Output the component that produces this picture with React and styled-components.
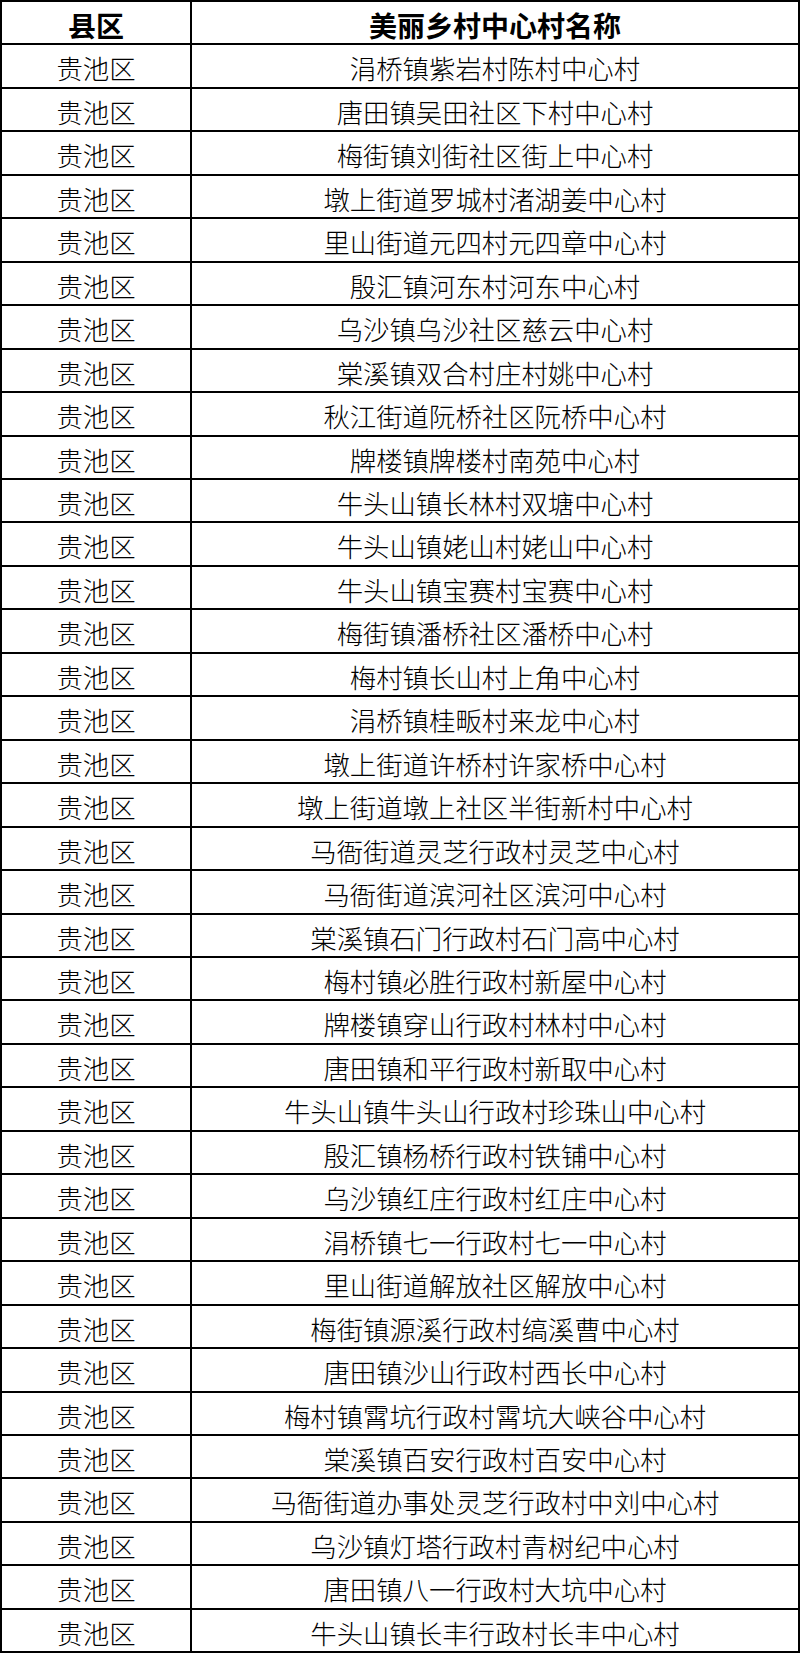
import React from "react";
import styled, { createGlobalStyle } from "styled-components";

const GlobalStyle = createGlobalStyle`
  html, body {
    margin: 0;
    padding: 0;
    background: #ffffff;
  }
  body {
    font-family: "Noto Sans CJK SC", "Noto Sans", sans-serif;
  }
`;

const Table = styled.div`
  width: 800px;
  height: 1653px;
  box-sizing: border-box;
  border: 2px solid #000;
  display: flex;
  flex-direction: column;
  background: #fff;
`;

const Row = styled.div`
  flex: 1 1 0;
  min-height: 0;
  display: grid;
  grid-template-columns: 188px 1fr;
  border-top: ${(p) => (p.$first ? "none" : "2px solid #000")};
`;

const Cell = styled.div`
  display: flex;
  align-items: center;
  justify-content: center;
  box-sizing: border-box;
  padding-top: ${(p) => (p.$head ? "4px" : "5px")};
  border-left: ${(p) => (p.$divider ? "2px solid #000" : "none")};
  font-family: "Noto Sans CJK SC", sans-serif;
  font-size: ${(p) => (p.$head ? "28px" : "26.4px")};
  font-weight: ${(p) => (p.$head ? 700 : 300)};
  color: #000;
  line-height: 1;
  white-space: nowrap;
`;

const names = [
  "涓桥镇紫岩村陈村中心村",
  "唐田镇吴田社区下村中心村",
  "梅街镇刘街社区街上中心村",
  "墩上街道罗城村渚湖姜中心村",
  "里山街道元四村元四章中心村",
  "殷汇镇河东村河东中心村",
  "乌沙镇乌沙社区慈云中心村",
  "棠溪镇双合村庄村姚中心村",
  "秋江街道阮桥社区阮桥中心村",
  "牌楼镇牌楼村南苑中心村",
  "牛头山镇长林村双塘中心村",
  "牛头山镇姥山村姥山中心村",
  "牛头山镇宝赛村宝赛中心村",
  "梅街镇潘桥社区潘桥中心村",
  "梅村镇长山村上角中心村",
  "涓桥镇桂畈村来龙中心村",
  "墩上街道许桥村许家桥中心村",
  "墩上街道墩上社区半街新村中心村",
  "马衙街道灵芝行政村灵芝中心村",
  "马衙街道滨河社区滨河中心村",
  "棠溪镇石门行政村石门高中心村",
  "梅村镇必胜行政村新屋中心村",
  "牌楼镇穿山行政村林村中心村",
  "唐田镇和平行政村新取中心村",
  "牛头山镇牛头山行政村珍珠山中心村",
  "殷汇镇杨桥行政村铁铺中心村",
  "乌沙镇红庄行政村红庄中心村",
  "涓桥镇七一行政村七一中心村",
  "里山街道解放社区解放中心村",
  "梅街镇源溪行政村缟溪曹中心村",
  "唐田镇沙山行政村西长中心村",
  "梅村镇霄坑行政村霄坑大峡谷中心村",
  "棠溪镇百安行政村百安中心村",
  "马衙街道办事处灵芝行政村中刘中心村",
  "乌沙镇灯塔行政村青树纪中心村",
  "唐田镇八一行政村大坑中心村",
  "牛头山镇长丰行政村长丰中心村",
];

export default function App() {
  return (
    <>
      <GlobalStyle />
      <Table>
        <Row $first>
          <Cell $head>县区</Cell>
          <Cell $head $divider>
            美丽乡村中心村名称
          </Cell>
        </Row>
        {names.map((n, i) => (
          <Row key={i}>
            <Cell>贵池区</Cell>
            <Cell $divider>{n}</Cell>
          </Row>
        ))}
      </Table>
    </>
  );
}
